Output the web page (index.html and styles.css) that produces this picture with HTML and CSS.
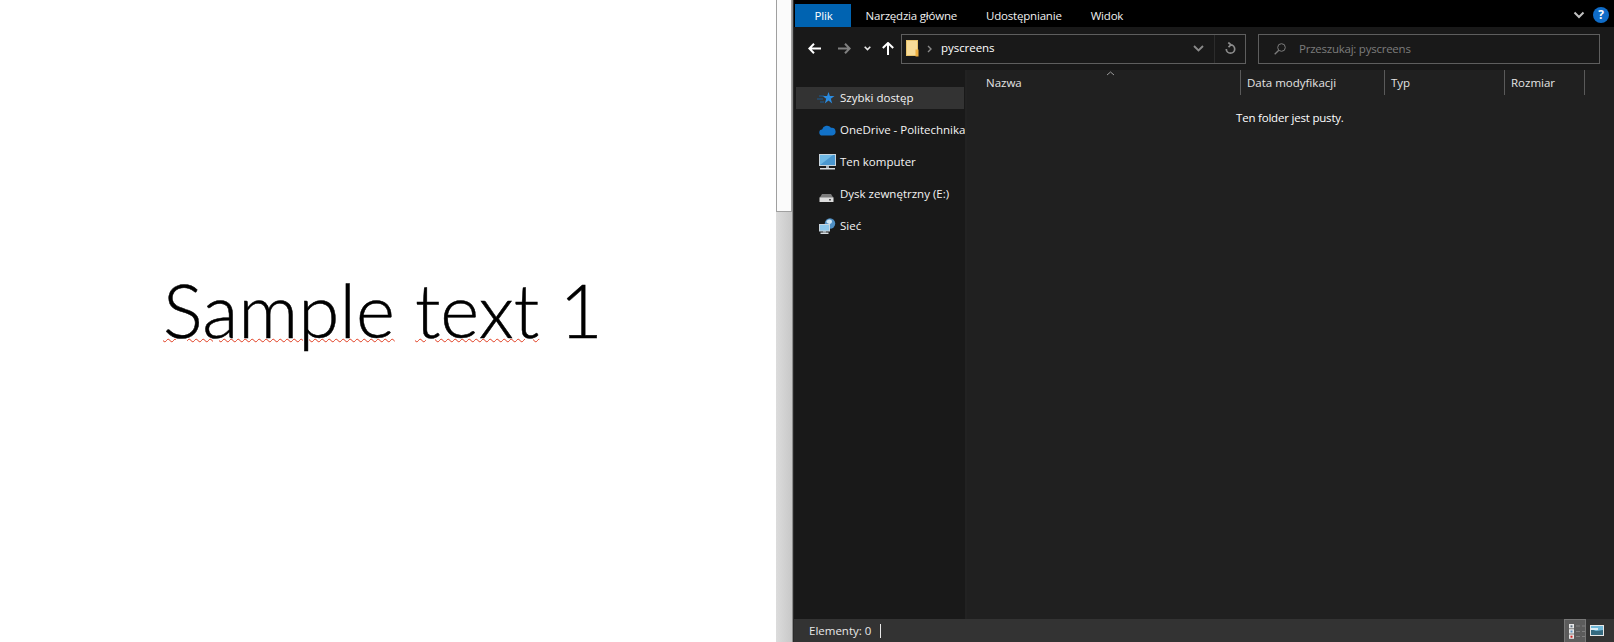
FILE: index.html

```html
<!DOCTYPE html>
<html lang="pl">
<head>
    <meta charset="UTF-8">
    <title>pyscreens</title>
    <link rel="stylesheet" href="styles.css">
</head>
<body>
    <!-- dokument -->
    <main class="doc">
        <p class="doc-text"><span class="typo">Sample</span> <span class="typo">text</span> 1</p>
    </main>
    <div class="scrollbar"><div class="thumb"></div></div>

    <!-- eksplorator -->
    <section class="explorer">
        <div class="ribbon">
            <div class="tab tab-file">Plik</div>
            <div class="tab">Narzędzia główne</div>
            <div class="tab">Udostępnianie</div>
            <div class="tab">Widok</div>
            <div class="ribbon-right">
                <svg width="12" height="8" viewBox="0 0 12 8"><path d="M1.5 1.5L6 6l4.500-4.500" fill="none" stroke="#c0c0c0" stroke-width="2"/></svg>
                <div class="help">?</div>
            </div>
        </div>

        <div class="navbar">
            <svg class="nav-back" width="13" height="11" viewBox="0 0 13 11"><path d="M6 0.700L1.300 5.500 6 10.300M2 5.500h11" fill="none" stroke="#fff" stroke-width="2"/></svg>
            <svg class="nav-forward" width="13" height="11" viewBox="0 0 13 11"><path d="M7 0.700l4.700 4.800L7 10.300M11 5.500H0" fill="none" stroke="#808080" stroke-width="2"/></svg>
            <svg class="nav-recent" width="7" height="5" viewBox="0 0 7 5"><path d="M0.700 0.700L3.500 3.500 6.300 0.700" fill="none" stroke="#e8e8e8" stroke-width="1.600"/></svg>
            <svg class="nav-up" width="12" height="13" viewBox="0 0 12 13"><path d="M0.800 6L6 1l5.200 5M6 1.500V13" fill="none" stroke="#fff" stroke-width="2"/></svg>

            <div class="address">
                <svg class="folder" width="13" height="17" viewBox="0 0 13 17">
                    <rect x="0.500" y="0.500" width="11" height="15" fill="#f8dc98" stroke="#e8c36c"/>
                    <path d="M9.500 9.500h3v7h-3z" fill="#f0b040"/>
                </svg>
                <svg class="crumb" width="5" height="8" viewBox="0 0 5 8"><path d="M1 1l3 3-3 3" fill="none" stroke="#8a8a8a" stroke-width="1.400"/></svg>
                <span class="address-text">pyscreens</span>
                <svg class="address-drop" width="11" height="7" viewBox="0 0 11 7"><path d="M1 1l4.500 4.500L10 1" fill="none" stroke="#8a8a8a" stroke-width="1.800"/></svg>
                <div class="address-refresh">
                    <svg width="11" height="13" viewBox="0 0 11 13"><path d="M5.500 2.800a4.200 4.200 0 1 1-4.200 4.200M3.300 0.500l2.700 2.300-2.500 2.400" fill="none" stroke="#8c8c8c" stroke-width="1.700"/></svg>
                </div>
            </div>

            <div class="search">
                <svg width="12" height="12" viewBox="0 0 12 12"><circle cx="7.500" cy="4.500" r="3.800" fill="none" stroke="#7c7c7c"/><path d="M4.800 7.200L0.700 11.300" stroke="#7c7c7c" stroke-width="1.300"/></svg>
                <span>Przeszukaj: pyscreens</span>
            </div>
        </div>

        <div class="body">
            <nav class="sidebar">
                <div class="side-row side-active">
                    <svg class="side-star" width="18" height="13" viewBox="0 0 18 13">
                        <path d="M11.500 0.500l1.400 4h4.600l-3.700 2.700 1.400 4.800-3.700-2.900-3.700 2.900 1.400-4.800L5.500 4.500h4.600z" fill="#2a8be0"/>
                        <path d="M2 4.500h5M0 7.500h6M3 10.500h4" stroke="#1a5c96"/>
                    </svg>
                    <span>Szybki dostęp</span>
                </div>
                <div class="side-row">
                    <svg class="side-icon" width="17" height="12" viewBox="0 0 17 12"><path d="M3.500 11.500a3 3 0 0 1-.4-6A5 5 0 0 1 12 3.800a3.900 3.900 0 0 1 1.300 7.700z" fill="#1272c8"/></svg>
                    <span>OneDrive - Politechnika</span>
                </div>
                <div class="side-row">
                    <svg class="side-icon" width="17" height="16" viewBox="0 0 17 16">
                        <rect x="0.500" y="0.500" width="16" height="11" fill="#6fb9e6" stroke="#c8d4dc"/>
                        <path d="M1 11L14 1h2v10z" fill="#4a97cf"/>
                        <path d="M7 12h3v2H7z" fill="#a8b4bc"/><path d="M1 14h15v1.500H1z" fill="#d8dee2"/>
                    </svg>
                    <span>Ten komputer</span>
                </div>
                <div class="side-row">
                    <svg class="side-icon side-drive" width="15" height="9" viewBox="0 0 15 9">
                        <path d="M3 0.500h9l2.500 4H0.500z" fill="#7c7c7c"/>
                        <rect x="0.500" y="4" width="14" height="4.500" fill="#dcdcdc"/>
                        <rect x="10" y="5.500" width="2" height="1.500" fill="#555"/>
                    </svg>
                    <span>Dysk zewnętrzny (E:)</span>
                </div>
                <div class="side-row">
                    <svg class="side-icon" width="17" height="16" viewBox="0 0 17 16">
                        <circle cx="11" cy="5.500" r="5.200" fill="#4f8fc4"/>
                        <path d="M8 2.500c2-2 5-1 5 1s-2 3-4 2-2-2-1-3z" fill="#cfe6f5"/>
                        <rect x="0.500" y="6.500" width="10" height="6.500" fill="#8cc6ea" stroke="#c8d4dc"/>
                        <path d="M4 13h3v1.500H4z" fill="#a8b4bc"/><path d="M1.500 14.500h8V16h-8z" fill="#d8dee2"/>
                    </svg>
                    <span>Sieć</span>
                </div>
            </nav>

            <div class="files">
                <div class="columns">
                    <div class="col col-name">Nazwa
                        <svg class="sort" width="9" height="5" viewBox="0 0 9 5"><path d="M1 4l3.500-3L8 4" fill="none" stroke="#9a9a9a"/></svg>
                    </div>
                    <div class="col col-date">Data modyfikacji</div>
                    <div class="col col-type">Typ</div>
                    <div class="col col-size">Rozmiar</div>
                </div>
                <p class="empty">Ten folder jest pusty.</p>
            </div>
        </div>

        <footer class="status">
            <span>Elementy: 0</span>
            <span class="status-sep"></span>
            <div class="views">
                <div class="view view-active">
                    <svg width="18" height="15" viewBox="0 0 18 15">
                        <rect width="5" height="4.400" fill="#e8e8e8"/><rect x="1.500" y="1.300" width="2" height="2" fill="#607080"/>
                        <rect y="5.200" width="5" height="4.400" fill="#e8e8e8"/><rect x="1.500" y="6.500" width="2" height="2" fill="#5a90c0"/>
                        <rect y="10.400" width="5" height="4.400" fill="#e8e8e8"/><rect x="1.500" y="11.700" width="2" height="2" fill="#d02020"/>
                        <path d="M7 2h4M13 2h4M7 7.500h4M13 7.500h4M7 12.500h4M13 12.500h4" stroke="#808080"/>
                    </svg>
                </div>
                <svg width="14" height="11" viewBox="0 0 14 11">
                    <rect x="0.500" y="0.500" width="13" height="10" fill="#70b8d8" stroke="#e8e8e8"/>
                    <path d="M1 4l5 2 7-1v5H1z" fill="#356a80"/><path d="M1 3h7v2H1z" fill="#dceef6"/>
                </svg>
            </div>
        </footer>
    </section>
</body>
</html>
```

FILE: styles.css

```css
html, body {
    margin: 0;
    padding: 0;
    height: 642px;
    overflow: hidden;
}
body {
    display: flex;
    background-color: #fff;
    font-family: "Open Sans", sans-serif;
    font-size: 11.5px;
}
svg {
    display: block;
    flex: none;
}

/* dokument */
.doc {
    width: 776px;
    flex: none;
    background-color: #fff;
}
.doc-text {
    margin: 0;
    padding: 265px 0 0 163px;
    font-family: Lato, sans-serif;
    font-weight: 300;
    font-size: 74.5px;
    line-height: 88px;
    color: #000;
    white-space: nowrap;
    -webkit-text-stroke: 0.5px #000;
}
.typo {
    text-decoration: underline wavy #e03c20 1px;
    text-underline-offset: 0;
    -webkit-text-stroke: 0.5px #000;
}
.scrollbar {
    width: 16px;
    flex: none;
    background: linear-gradient(to right, #dcdcdc, #c8c8c8);
    border-right: 1px solid #8c8c8c;
}
.thumb {
    height: 212px;
    background-color: #fbfbfb;
    border: 1px solid #a0a0a0;
    border-top: 0;
    box-sizing: border-box;
    width: 16px;
}

/* eksplorator */
.explorer {
    flex: 1;
    display: flex;
    flex-direction: column;
    background-color: #191919;
    color: #fff;
    border-left: 1px solid #2c2c2c;
}
.ribbon {
    height: 27px;
    flex: none;
    display: flex;
    align-items: flex-end;
    background-color: #000;
    padding-left: 1px;
}
.tab {
    height: 23px;
    line-height: 23px;
    padding: 0 14.5px;
    color: #f0f0f0;
    letter-spacing: -0.2px;
}
.tab-file {
    width: 56px;
    box-sizing: border-box;
    padding: 0 0 0 1px;
    text-align: center;
    background-color: #0063b1;
    color: #fff;
}
.ribbon-right {
    margin-left: auto;
    display: flex;
    align-items: center;
    gap: 8px;
    padding: 0 5px 4px 0;
}
.help {
    width: 16px;
    height: 16px;
    border-radius: 50%;
    background-color: #0f6cc8;
    color: #fff;
    font-weight: 700;
    font-size: 12px;
    line-height: 16px;
    text-align: center;
}
.navbar {
    height: 43px;
    flex: none;
    display: flex;
    align-items: center;
    background-color: #191919;
    padding-left: 14px;
}
.nav-forward { margin-left: 17px; }
.nav-recent { margin-left: 13px; }
.nav-up { margin-left: 11px; }
.address {
    width: 345px;
    height: 30px;
    margin-left: 7px;
    box-sizing: border-box;
    border: 1px solid #5e5e5e;
    display: flex;
    align-items: center;
    padding-left: 4px;
}
.crumb { margin-left: 8px; }
.address-text {
    margin-left: 9px;
    padding-bottom: 2px;
    letter-spacing: -0.05px;
}
.address-drop { margin-left: auto; }
.address-refresh {
    width: 30px;
    height: 100%;
    margin-left: 10px;
    display: flex;
    align-items: center;
    justify-content: center;
    border-left: 1px solid #2c2c2c;
}
.search {
    width: 342px;
    height: 30px;
    margin-left: 12px;
    box-sizing: border-box;
    border: 1px solid #5e5e5e;
    display: flex;
    align-items: center;
    gap: 13px;
    padding-left: 15px;
    color: #7c7c7c;
    letter-spacing: -0.24px;
}
.body {
    flex: 1;
    display: flex;
    min-height: 0;
}
.sidebar {
    width: 173px;
    flex: none;
    padding-top: 17px;
    display: flex;
    flex-direction: column;
    gap: 10px;
    box-sizing: border-box;
    border-right: 2px solid #222;
    overflow: hidden;
}
.side-row {
    height: 22px;
    box-sizing: border-box;
    margin: 0 1px 0 2px;
    padding: 0 0 2px 44px;
    display: flex;
    align-items: center;
    position: relative;
    white-space: nowrap;
    color: #f4f4f4;
}
.side-active {
    background-color: #333;
}
.side-icon, .side-star {
    position: absolute;
    left: 23px;
    top: 50%;
    transform: translateY(-50%);
}
.side-star { left: 21px; }
.side-drive { top: 70%; }
.files {
    flex: 1;
    background-color: #202020;
}
.columns {
    display: flex;
    height: 25px;
    color: #e4e4e4;
}
.col {
    box-sizing: border-box;
    height: 25px;
    line-height: 25px;
    border-right: 1px solid #5a5a5a;
    padding-left: 6px;
    position: relative;
}
.col-name { width: 274px; padding-left: 19px; }
.col-date { width: 144px; }
.col-type { width: 120px; }
.col-size { width: 80px; }
.sort {
    position: absolute;
    left: 139px;
    top: 1px;
}
.empty {
    margin: 15px 0 0;
    padding-left: 269px;
    line-height: 16px;
    color: #fff;
    letter-spacing: -0.2px;
}
.status {
    height: 23px;
    flex: none;
    display: flex;
    align-items: center;
    background-color: #333;
    padding-left: 15px;
    color: #e8e8e8;
}
.status-sep {
    width: 1px;
    height: 14px;
    margin-left: 9px;
    background-color: #e8e8e8;
}
.views {
    margin-left: auto;
    height: 100%;
    display: flex;
    align-items: center;
    gap: 4px;
    padding-right: 10px;
}
.view {
    width: 22px;
    height: 23px;
    box-sizing: border-box;
    border: 1px solid #777;
    border-bottom: 0;
    background-color: #5c5c5c;
    display: flex;
    align-items: center;
    padding-left: 4px;
    overflow: hidden;
}
```
